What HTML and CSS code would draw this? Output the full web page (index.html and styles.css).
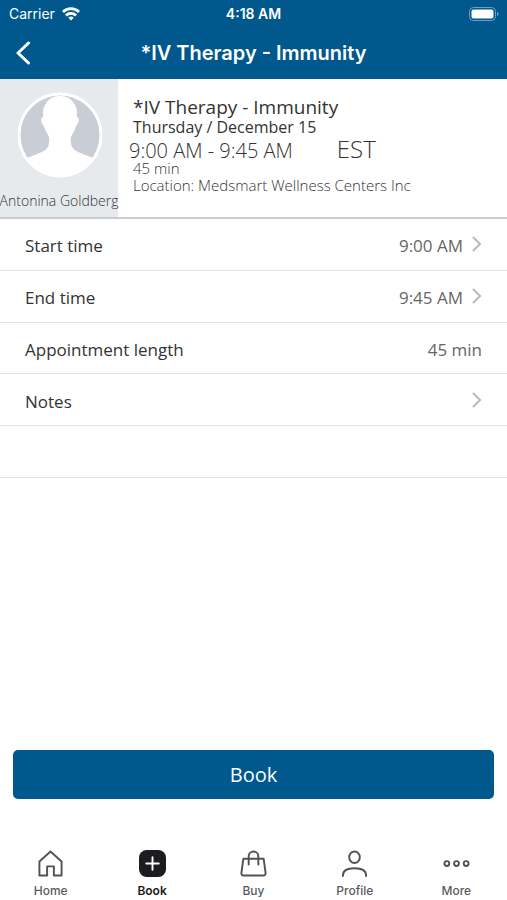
FILE: index.html
```html
<!DOCTYPE html>
<html lang="en">
<head>
<meta charset="utf-8">
<meta name="viewport" content="width=device-width, initial-scale=1">
<title>*IV Therapy - Immunity</title>
<link rel="stylesheet" href="styles.css">
</head>
<body>
<header class="top">
  <div class="status">
    <span class="carrier">Carrier
      <svg width="18" height="14" viewBox="0 0 18 14" fill="none" stroke="#fff" stroke-width="2.8" aria-hidden="true"><path d="M1 4.900a11.500 11.500 0 0 1 16 0M4 8.400a7.200 7.200 0 0 1 10 0"/><path d="M9 13.600l-2.700-2.800a3.900 3.900 0 0 1 5.400 0z" fill="#fff" stroke="none"/></svg>
    </span>
    <span class="clock">4:18 AM</span>
    <svg class="battery" width="30" height="14" viewBox="0 0 30 14" aria-hidden="true"><rect x=".5" y=".5" width="26" height="13" rx="4" fill="none" stroke="#6f9fc1"/><rect x="2.500" y="2.500" width="22" height="9" rx="2" fill="#fff"/><path d="M28 5c2 .5 2 3.500 0 4z" fill="#6f9fc1"/></svg>
  </div>
  <div class="nav">
    <button class="back" type="button" aria-label="Back"><svg width="16" height="24" viewBox="0 0 16 24" fill="none" stroke="#fff" stroke-width="3" stroke-linecap="round" stroke-linejoin="round"><path d="M13.500 2L3 12l10.500 10"/></svg></button>
    <h1>*IV Therapy - Immunity</h1>
  </div>
</header>
<main>
  <section class="summary">
    <figure class="provider">
      <svg width="88" height="88" viewBox="0 0 88 88" aria-hidden="true"><circle cx="45" cy="44" r="41" fill="#c9ced6" stroke="#fff" stroke-width="3"/><path d="M45 5c11 0 18 8 17 21 3 0 2 7-1 9-1 5-4 8-5 11-1 8 1 12 7 15l15 6c-8 12-19 18-33 18S20 79 12 67l15-6c6-3 8-7 7-15-1-3-4-6-5-11-3-2-4-9-1-9C27 13 34 5 45 5z" fill="#fff"/></svg>
      <figcaption>Antonina Goldberg</figcaption>
    </figure>
    <div class="info">
      <h2>*IV Therapy - Immunity</h2>
      <p class="date">Thursday / December 15</p>
      <p class="times"><span>9:00 AM - 9:45 AM</span><span class="zone">EST</span></p>
      <p class="small">45 min</p>
      <p class="small">Location: Medsmart Wellness Centers Inc</p>
    </div>
  </section>
  <div class="rows">
    <button class="row" type="button"><span>Start time</span><span class="value">9:00 AM</span><svg class="chev" width="10" height="16" viewBox="0 0 10 16"><path d="M1 1l7 7-7 7"/></svg></button>
    <button class="row" type="button"><span>End time</span><span class="value">9:45 AM</span><svg class="chev" width="10" height="16" viewBox="0 0 10 16"><path d="M1 1l7 7-7 7"/></svg></button>
    <div class="row"><span>Appointment length</span><span class="value">45 min</span></div>
    <button class="row" type="button"><span>Notes</span><span class="value"></span><svg class="chev" width="10" height="16" viewBox="0 0 10 16"><path d="M1 1l7 7-7 7"/></svg></button>
    <div class="row"></div>
  </div>
</main>
<footer>
  <button class="submit" type="button">Book</button>
  <nav class="tabs" aria-label="Main">
    <a href="#home"><svg viewBox="0 0 28 28"><path d="M2.500 12L14 1.500 25.500 12v14.500h-8V17h-7v9.500h-8z"/></svg>Home</a>
    <a href="#book" class="active" aria-current="page"><svg viewBox="0 0 28 28"><rect x="0" y="0" width="28" height="28" rx="8" fill="#1b1c20" stroke="none"/><path d="M14 7.500v13M7.500 14h13" stroke="#fff"/></svg>Book</a>
    <a href="#buy"><svg viewBox="0 0 28 28"><path d="M3.500 9h21l2 14.500q.3 3-2.500 3H4q-2.800 0-2.500-3zM9 15V6.500a5 5 0 0 1 10 0V15"/></svg>Buy</a>
    <a href="#profile"><svg viewBox="0 0 28 28"><ellipse cx="14" cy="7.500" rx="5.500" ry="6"/><path d="M2 27v-.5C2 21.500 6.500 19 14 19s12 2.500 12 7.500v.5"/></svg>Profile</a>
    <a href="#more"><svg viewBox="0 0 28 28"><circle cx="4" cy="14" r="2.500"/><circle cx="14" cy="14" r="2.500"/><circle cx="24" cy="14" r="2.500"/></svg>More</a>
  </nav>
</footer>
</body>
</html>
```
FILE: styles.css
```css
* { box-sizing: border-box; }
body {
  margin: 0;
  min-height: 100vh;
  display: flex;
  flex-direction: column;
  background: #fff;
  color: #333;
  font-family: "Open Sans", sans-serif;
}
h1, h2, p, figure { margin: 0; font-weight: 400; }
button { margin: 0; padding: 0; border: 0; background: none; font: inherit; color: inherit; cursor: pointer; }
svg { display: block; }

.top { background: #00588c; color: #fff; font-family: Inter, sans-serif; }
.status, .nav { display: grid; grid-template-columns: 1fr auto 1fr; align-items: center; }
.status { height: 27px; padding: 0 8px; font-size: 14px; }
.carrier { display: flex; align-items: center; gap: 7px; padding-left: 1px; }
.clock { font-weight: 600; }
.battery { justify-self: end; }
.nav { height: 52px; padding: 0 15px; }
.back { justify-self: start; }
.nav h1 { font-size: 20px; font-weight: 600; }

.summary { display: flex; border-bottom: 2px solid #cbccd2; }
.provider {
  width: 118px;
  height: 138px;
  padding-top: 12px;
  display: flex;
  flex-direction: column;
  align-items: center;
  gap: 12px;
  background: #e7eaed;
  font-size: 14px;
  font-weight: 300;
  line-height: 20px;
  white-space: nowrap;
}
.info { flex: 1; padding: 17px 15px 0; }
.info h2 { font-size: 19px; line-height: 22px; }
.date { font-size: 16px; line-height: 18px; }
.times { display: flex; align-items: baseline; gap: 44px; height: 24px; margin-left: -4px; font-size: 20px; font-weight: 300; line-height: 26px; }
.zone { font-size: 24px; }
.small { font-size: 15px; font-weight: 300; line-height: 17px; }

.rows { display: grid; grid-template-rows: repeat(5, 1fr); min-height: 259px; }
.row {
  display: flex;
  align-items: center;
  gap: 9px;
  padding: 3px 25px 0;
  border-bottom: 1px solid #e3e4e5;
  font-size: 17px;
  text-align: left;
}
.value { margin-left: auto; color: #666; }
.chev { margin-bottom: 3px; fill: none; stroke: #b9b9b9; stroke-width: 2; }

footer { margin-top: auto; }
.submit {
  display: block;
  width: calc(100% - 26px);
  height: 49px;
  margin: 0 13px 51px;
  border-radius: 5px;
  background: #00588c;
  color: #fff;
  font-size: 20px;
}
.tabs { display: grid; grid-template-columns: repeat(5, 1fr); font-family: Inter, sans-serif; }
.tabs a {
  height: 50px;
  display: flex;
  flex-direction: column;
  align-items: center;
  gap: 5px;
  color: #5b5c60;
  font-size: 12px;
  font-weight: 500;
  line-height: 18px;
  text-decoration: none;
}
.tabs svg { width: 27px; height: 27px; fill: none; stroke: #515256; stroke-width: 2; stroke-linecap: round; stroke-linejoin: round; }
.tabs .active { color: #1b1c20; font-weight: 600; }
```
